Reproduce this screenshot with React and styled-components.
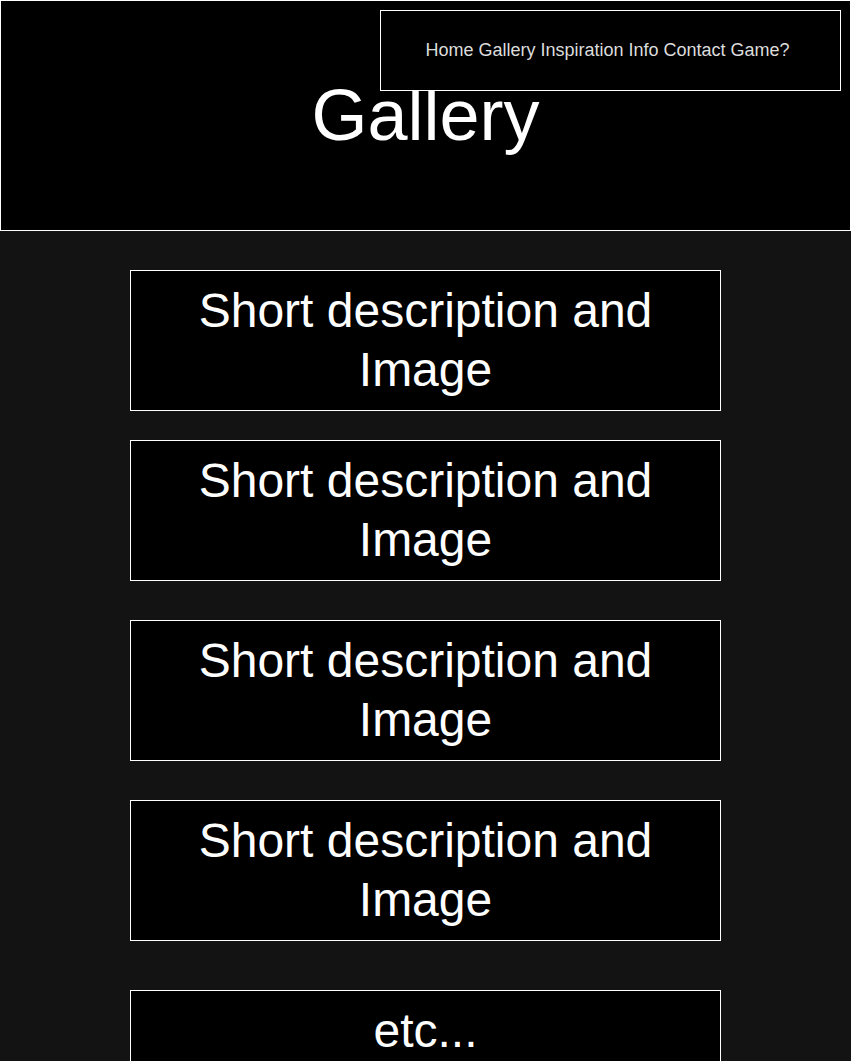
import React from 'react';
import styled, { createGlobalStyle } from 'styled-components';

const GlobalStyle = createGlobalStyle`
  html, body {
    margin: 0;
    padding: 0;
    background: #131313;
    font-family: "Liberation Sans", Arial, sans-serif;
    color: #fff;
  }
`;

const Header = styled.header`
  position: relative;
  box-sizing: border-box;
  height: 231px;
  background: #000;
  border: 1px solid #fff;
  padding-top: 73px;
  text-align: center;
`;

const Title = styled.h1`
  margin: 0;
  font-size: 72px;
  font-weight: normal;
  line-height: normal;
`;

const Nav = styled.nav`
  position: absolute;
  top: 9px;
  right: 9px;
  box-sizing: border-box;
  width: 461px;
  height: 81px;
  padding-right: 6px;
  border: 1px solid #fff;
  background: #000;
  display: flex;
  align-items: center;
  justify-content: center;
  gap: 5px;
  font-size: 18px;
  color: #ddd;
`;

const NavLink = styled.a`
  color: inherit;
  text-decoration: none;
`;

const List = styled.main`
  display: flex;
  flex-direction: column;
  align-items: center;
  padding-top: 39px;
`;

const Card = styled.section`
  box-sizing: border-box;
  width: 591px;
  margin-top: ${(p) => p.$gap || 0}px;
  padding: 10px 0 11px;
  background: #000;
  border: 1px solid #fff;
  text-align: center;
  font-size: 48px;
  line-height: 59px;
`;

const links = ['Home', 'Gallery', 'Inspiration', 'Info', 'Contact', 'Game?'];
const gaps = [0, 29, 39, 39];

function App() {
  return (
    <>
      <GlobalStyle />
      <Header>
        <Title>Gallery</Title>
        <Nav>
          {links.map((l) => (
            <NavLink key={l} href="#">{l}</NavLink>
          ))}
        </Nav>
      </Header>
      <List>
        {gaps.map((g, i) => (
          <Card key={i} $gap={g}>
            Short description and
            <br />
            Image
          </Card>
        ))}
        <Card $gap={49}>etc...</Card>
      </List>
    </>
  );
}

export default App;
